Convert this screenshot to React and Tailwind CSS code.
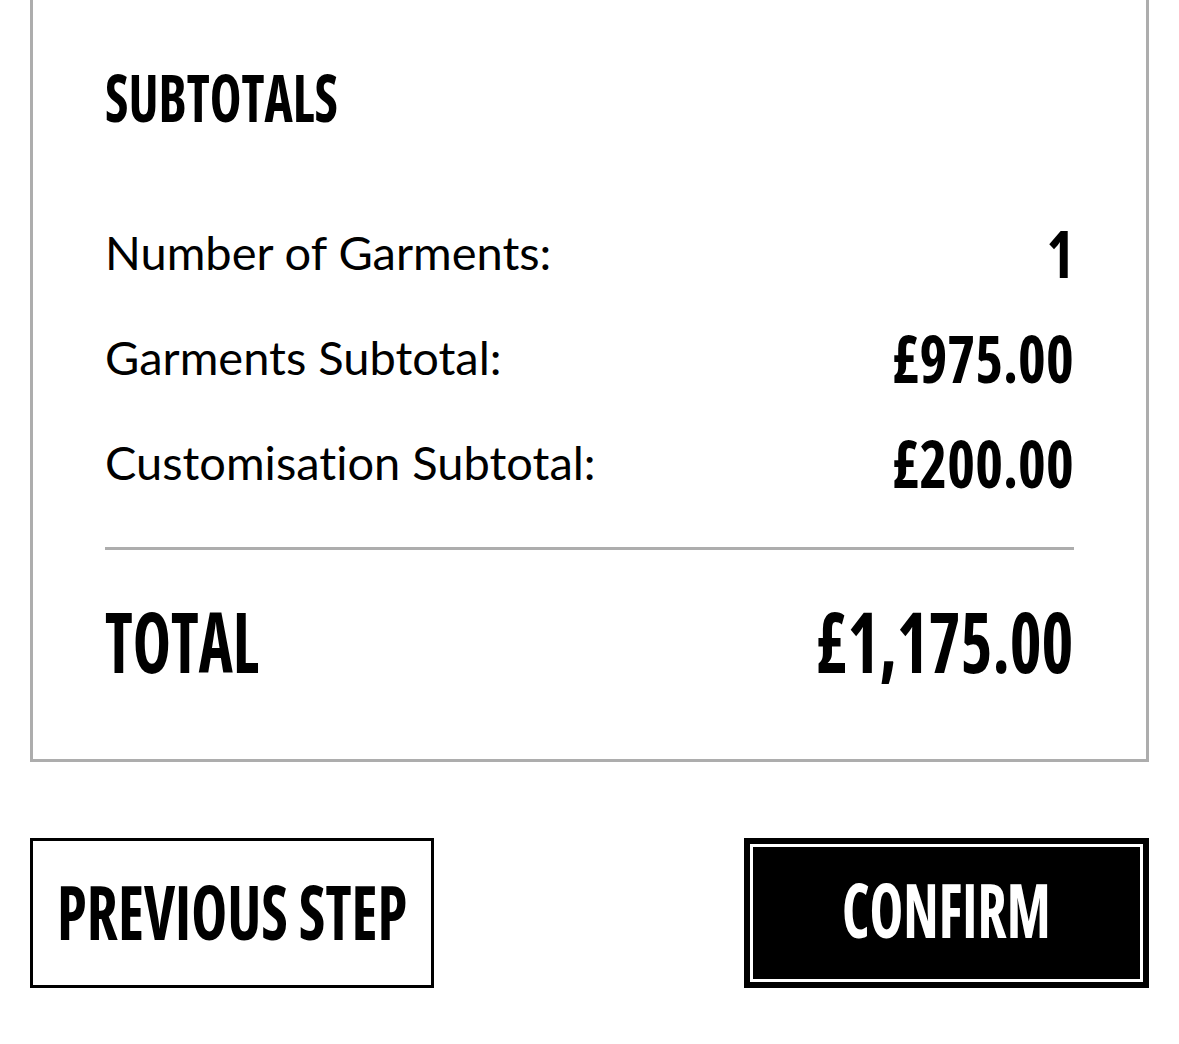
function Cond({ children, className = "" }) {
  return (
    <span
      className={`inline-block whitespace-nowrap font-['Open_Sans',sans-serif] font-bold [font-stretch:75%] leading-none ${className}`}
    >
      {children}
    </span>
  );
}

function Row({ label, value }) {
  return (
    <div className="flex h-[105px] items-center justify-between">
      <span className="font-['Lato',sans-serif] text-[47px] leading-none text-black whitespace-nowrap [font-variant-ligatures:none]">
        {label}
      </span>
      <Cond className="origin-right scale-x-[0.885] text-[67px] text-black">
        {value}
      </Cond>
    </div>
  );
}

export default function App() {
  return (
    <div className="min-h-[1044px] bg-white px-[30px]">
      <div className="border-x-[3px] border-b-[3px] border-[#adadad] px-[72px] pt-[63px] pb-[29px]">
        <h2 className="h-[67px]">
          <Cond className="origin-left scale-x-[0.8] text-[67px] text-black">SUBTOTALS</Cond>
        </h2>
        <div className="mt-[70px]">
          <Row label="Number of Garments:" value="1" />
          <Row label="Garments Subtotal:" value="£975.00" />
          <Row label="Customisation Subtotal:" value="£200.00" />
        </div>
        <div className="mt-[32px] h-[3px] bg-[#adadad]" />
        <div className="flex h-[180px] items-center justify-between">
          <Cond className="origin-left scale-x-[0.76] text-[85px] text-black">TOTAL</Cond>
          <Cond className="origin-right scale-x-[0.8] text-[85px] text-black">
            £1,175.00
          </Cond>
        </div>
      </div>
      <div className="mt-[76px] flex justify-between">
        <button className="flex h-[150px] w-[404px] items-center justify-center border-[3px] border-black bg-white pb-[3px]">
          <Cond className="origin-center scale-x-[0.81] text-[75px] text-black">
            PREVIOUS STEP
          </Cond>
        </button>
        <button className="h-[150px] w-[405px] bg-black p-[6px]">
          <div className="flex h-full w-full items-center justify-center border-[3px] border-white pb-[7px]">
            <Cond className="origin-center scale-x-[0.76] text-[75px] text-white">
              CONFIRM
            </Cond>
          </div>
        </button>
      </div>
    </div>
  );
}
